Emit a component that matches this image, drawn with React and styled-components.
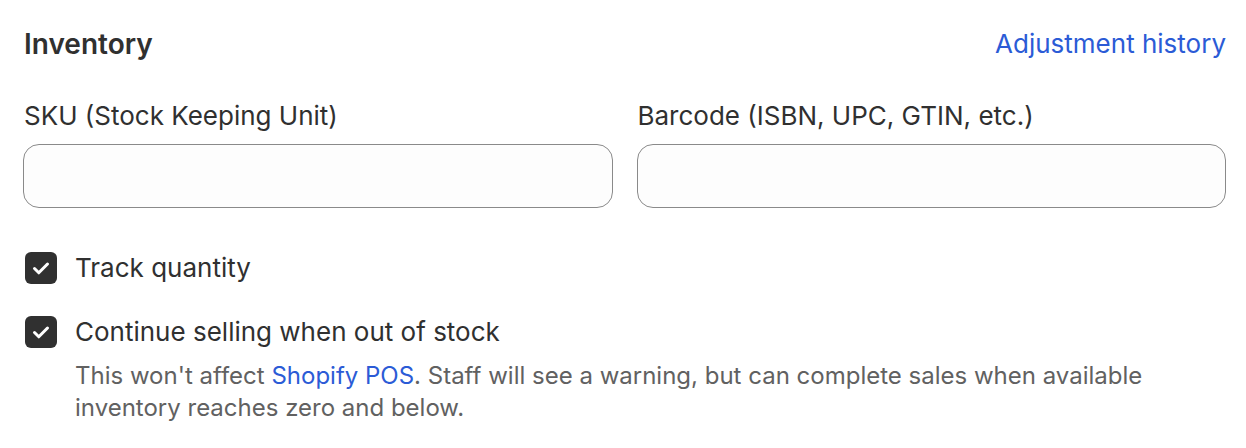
import React from "react";
import styled, { createGlobalStyle } from "styled-components";

const Global = createGlobalStyle`
  html, body { margin: 0; padding: 0; background: #ffffff; }
  body { font-family: Inter, "Noto Sans", sans-serif; color: #303030; -webkit-font-smoothing: antialiased; }
  * { box-sizing: border-box; }
`;

const Card = styled.section`
  width: 1246px;
  height: 448px;
  padding: 28px 20px 24px 23px;
  display: flex;
  flex-direction: column;
  background: #ffffff;
`;

const Header = styled.div`
  display: flex;
  align-items: center;
  justify-content: space-between;
  height: 32px;
`;

const Title = styled.h2`
  margin: 0;
  font-size: 28px;
  font-weight: 600;
  line-height: 32px;
  color: #303030;
  padding-left: 1px;
`;

const Link = styled.a`
  font-size: 26px;
  line-height: 32px;
  color: #2b5bd6;
  text-decoration: none;
  cursor: pointer;
`;

const Fields = styled.div`
  display: grid;
  grid-template-columns: 1fr 1fr;
  column-gap: 24px;
  margin-top: 40px;
`;

const Field = styled.div`
  display: flex;
  flex-direction: column;
  gap: 12px;
`;

const Label = styled.label`
  font-size: 26px;
  line-height: 32px;
  color: #303030;
  padding-left: 1px;
`;

const Input = styled.input`
  height: 64px;
  width: 100%;
  border: 1.5px solid #8a8a8a;
  border-radius: 16px;
  background: #fdfdfd;
  font: inherit;
  font-size: 26px;
  padding: 0 20px;
  outline: none;
`;

const Options = styled.div`
  display: flex;
  flex-direction: column;
  gap: 32px;
  margin-top: 44px;
`;

const Option = styled.div`
  display: grid;
  grid-template-columns: 32px 1fr;
  column-gap: 18px;
  row-gap: 12px;
  padding-left: 2px;
`;

const Box = styled.span`
  width: 32px;
  height: 32px;
  border-radius: 6px;
  background: #303030;
  display: flex;
  align-items: center;
  justify-content: center;
`;

const OptionLabel = styled.span`
  font-size: 26px;
  line-height: 32px;
  color: #303030;
`;

const Help = styled.p`
  grid-column: 2;
  margin: 0;
  font-size: 24px;
  line-height: 32px;
  color: #616161;
  max-width: 1100px;
`;

const InlineLink = styled.a`
  color: #2b5bd6;
  text-decoration: none;
`;

const Check = () => (
  <svg width="32" height="32" viewBox="0 0 32 32" fill="none">
    <path d="M9.5 16.5 L13.8 20.8 L22.5 12" stroke="#ffffff" strokeWidth="3" strokeLinecap="round" strokeLinejoin="round" />
  </svg>
);

function Checkbox({ label, children }) {
  return (
    <Option>
      <Box role="checkbox" aria-checked="true"><Check /></Box>
      <OptionLabel>{label}</OptionLabel>
      {children}
    </Option>
  );
}

export default function App() {
  return (
    <>
      <Global />
      <Card>
        <Header>
          <Title>Inventory</Title>
          <Link>Adjustment history</Link>
        </Header>
        <Fields>
          <Field>
            <Label>SKU (Stock Keeping Unit)</Label>
            <Input />
          </Field>
          <Field>
            <Label>Barcode (ISBN, UPC, GTIN, etc.)</Label>
            <Input />
          </Field>
        </Fields>
        <Options>
          <Checkbox label="Track quantity" />
          <Checkbox label="Continue selling when out of stock">
            <Help>
              This won't affect <InlineLink>Shopify POS</InlineLink>. Staff will see a warning, but can complete sales when available inventory reaches zero and below.
            </Help>
          </Checkbox>
        </Options>
      </Card>
    </>
  );
}
